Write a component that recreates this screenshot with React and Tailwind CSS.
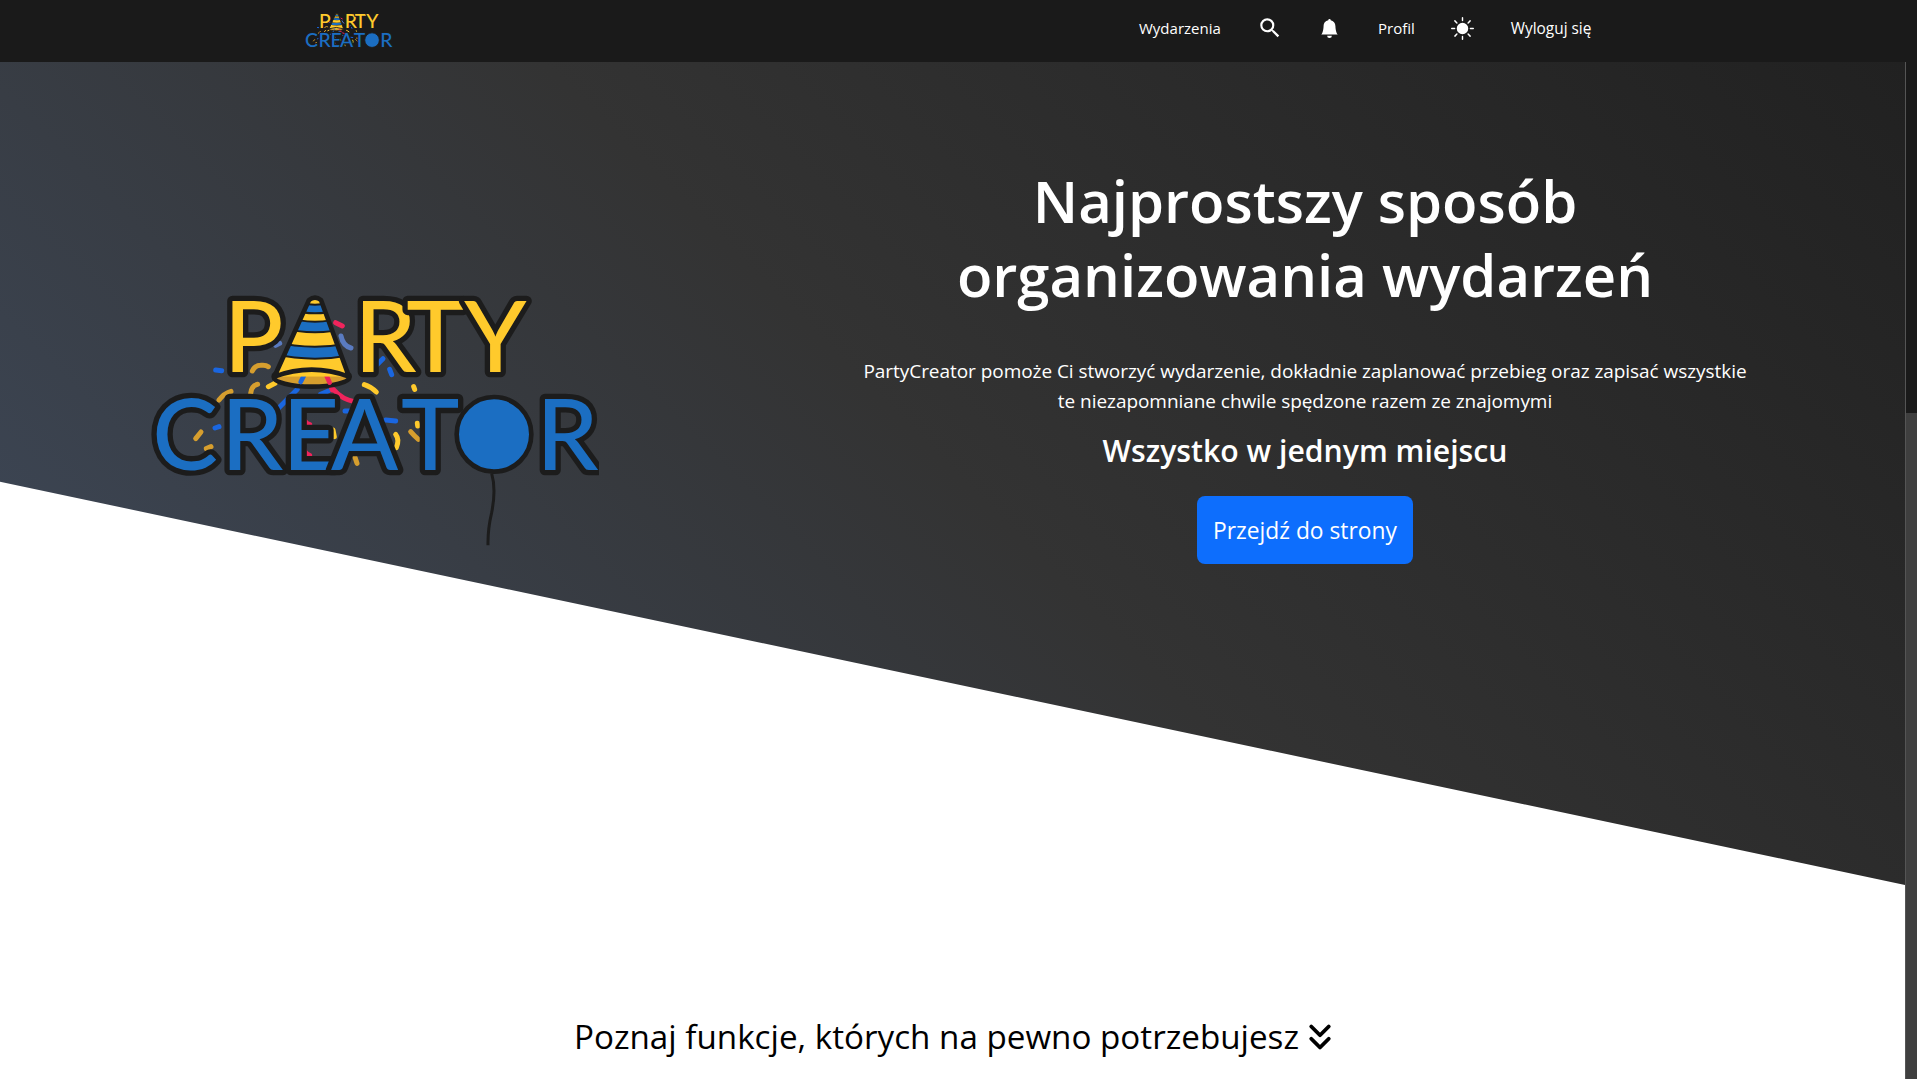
import React from 'react';
import { MdSearch } from 'react-icons/md';
import { BsBellFill, BsSunFill } from 'react-icons/bs';
import { ChevronsDown } from 'lucide-react';

const confetti = [
  ['M290 302 L308 304', '#1a66e0'],
  ['M400 305 Q408 288 425 288 Q440 286 448 292', '#d69e2e'],
  ['M395 372 Q398 348 416 345', '#d69e2e'],
  ['M300 392 Q315 372 336 366', '#d69e2e'],
  ['M230 508 L246 488', '#d69e2e'],
  ['M262 538 L276 532', '#d69e2e'],
  ['M288 476 L300 472', '#1a66e0'],
  ['M470 425 L535 360', '#1a66e0'],
  ['M605 375 L628 365', '#1a66e0'],
  ['M760 300 L792 268', '#1a66e0'],
  ['M812 300 L818 316', '#1a66e0'],
  ['M678 425 L690 425', '#1a66e0'],
  ['M800 452 L830 455', '#1a66e0'],
  ['M470 228 L482 222', '#5a7bc0'],
  ['M666 200 Q672 230 696 236', '#5a7bc0'],
  ['M650 160 L670 170', '#f0245c'],
  ['M645 362 Q668 390 710 398', '#f0245c'],
  ['M622 318 L640 362', '#f0245c'],
  ['M550 436 Q552 458 572 466', '#f0245c'],
  ['M552 525 Q552 552 572 558', '#f0245c'],
  ['M448 352 L468 342', '#ffca2c'],
  ['M736 346 Q755 352 772 368', '#ffca2c'],
  ['M884 352 L887 360', '#ffca2c'],
  ['M642 482 L646 502', '#ffca2c'],
  ['M830 495 Q842 510 832 535', '#ffca2c'],
  ['M895 462 L896 470', '#ffca2c'],
  ['M875 487 Q886 500 898 510', '#d69e2e'],
  ['M708 564 L714 582', '#d69e2e'],
];

// logo text stays real text, the hat and the balloon are drawn
const Logo = ({ className, line = true }) => (
  <svg viewBox="90 65 1350 765" className={className}>
    <defs>
      <clipPath id="hat-clip">
        <path d="M570 92 Q588 78 606 92 L690 322 L466 322 Z" />
      </clipPath>
    </defs>
    {confetti.map(([d, c]) => (
      <path key={d} d={d} fill="none" stroke={c} strokeWidth="15" strokeLinecap="round" />
    ))}
    <g fontFamily="Lato, sans-serif" fontWeight="500" strokeLinejoin="round" strokeWidth="32" style={{ paintOrder: 'stroke' }}>
      <text x="314 706 862 1036" y="308" fontSize="296" fill="#ffca2c" stroke="#1c1c1c">PRTY</text>
      <text x="100 306 490 636 846" y="602" fontSize="296" fill="#1b6ec2" stroke="#1c1c1c">CREAT</text>
      <text x="1252" y="602" fontSize="296" fill="#1b6ec2" stroke="#1c1c1c">R</text>
    </g>
    {line && <path d="M1118 612 Q1132 660 1118 730 Q1106 780 1107 828" fill="none" stroke="#1c1c1c" strokeWidth="9" />}
    <circle cx="1125" cy="495" r="112" fill="#1b6ec2" stroke="#1c1c1c" strokeWidth="14" />
    <ellipse cx="578" cy="322" rx="114" ry="30" fill="#d69e2e" stroke="#1c1c1c" strokeWidth="14" />
    <path d="M545 338 L555 318" stroke="#1a66e0" strokeWidth="14" strokeLinecap="round" />
    <path d="M622 318 L632 340" stroke="#f0245c" strokeWidth="14" strokeLinecap="round" />
    <g clipPath="url(#hat-clip)">
      <rect x="440" y="70" width="280" height="260" fill="#ffca2c" />
      <path d="M520 108 Q588 130 656 108" fill="none" stroke="#1c1c1c" strokeWidth="32" />
      <path d="M520 108 Q588 130 656 108" fill="none" stroke="#1b6ec2" strokeWidth="20" />
      <path d="M490 158 Q588 188 686 158" fill="none" stroke="#1c1c1c" strokeWidth="38" />
      <path d="M490 158 Q588 188 686 158" fill="none" stroke="#1b6ec2" strokeWidth="26" />
      <path d="M450 232 Q588 268 726 232" fill="none" stroke="#1c1c1c" strokeWidth="42" />
      <path d="M450 232 Q588 268 726 232" fill="none" stroke="#1b6ec2" strokeWidth="30" />
    </g>
    <path d="M466 322 L570 92 Q588 78 606 92 L690 322 Q578 280 466 322 Z" fill="none" stroke="#1c1c1c" strokeWidth="14" strokeLinejoin="round" />
  </svg>
);

const Navbar = () => (
  <nav className="h-[62px] w-full shrink-0 bg-[#1a1a1a] flex items-start pl-[304px] text-white text-[15px] overflow-hidden">
    <Logo className="w-[89px] h-[50px] mt-3 shrink-0" line={false} />
    <div className="flex items-center h-[56px] ml-[746px]">
      <a className="w-[82px]">Wydarzenia</a>
      <MdSearch className="w-[26px] h-[26px] ml-[36px] text-white" />
      <BsBellFill className="w-[19px] h-[19px] ml-[37px] text-white" />
      <a className="ml-[39px]">Profil</a>
      <BsSunFill className="w-[23px] h-[23px] ml-[36px] text-white" />
      <a className="ml-[37px] pt-px text-[15.4px]">Wyloguj się</a>
    </div>
  </nav>
);

const Hero = () => (
  <section className="h-[823px] shrink-0 flex text-white bg-[linear-gradient(45deg,#3f4b5e_0%,#333333_50%,#212121_100%)] [clip-path:polygon(0_0,100%_0,100%_100%,0_51%)]">
    <div className="w-[855px] pl-[149px] pt-[229px] shrink-0">
      <Logo className="w-[450px] h-[255px]" />
    </div>
    <div className="w-[900px] pt-[102px] flex flex-col items-center text-center">
      <h1 className="text-[58px] leading-[74px] font-semibold">Najprostszy sposób<br />organizowania wydarzeń</h1>
      <p className="mt-[44px] text-[19px] leading-[30px] tracking-[-0.05px] whitespace-nowrap">
        PartyCreator pomoże Ci stworzyć wydarzenie, dokładnie zaplanować przebieg oraz zapisać wszystkie<br />
        te niezapomniane chwile spędzone razem ze znajomymi
      </p>
      <h2 className="mt-[11px] text-[30.2px] leading-[48px] font-semibold">Wszystko w jednym miejscu</h2>
      <button className="mt-[21px] w-[216px] h-[68px] rounded-lg bg-[#0d6efd] text-[22.8px] text-white pt-[3px]">Przejdź do strony</button>
    </div>
  </section>
);

export default function App() {
  return (
    <div className="h-screen overflow-hidden flex flex-col bg-white font-['Open_Sans',sans-serif]">
      <Navbar />
      <div className="flex flex-1 min-h-0">
        <main className="flex-1 min-w-0 flex flex-col">
          <Hero />
          <div className="pt-[124px] flex items-center justify-center gap-[10px] text-black text-[33.2px] leading-[56px]">
            <h3>Poznaj funkcje, których na pewno potrzebujesz</h3>
            <ChevronsDown className="w-[42px] h-[42px] -mx-[10px]" strokeWidth={2.2} />
          </div>
        </main>
        {/* scrollbar */}
        <div className="w-3 shrink-0 flex flex-col bg-[#1a1a1a] border-l border-[#555]">
          <div className="h-[351px]" />
          <div className="flex-1 bg-[#3f3f3f]" />
        </div>
      </div>
    </div>
  );
}
